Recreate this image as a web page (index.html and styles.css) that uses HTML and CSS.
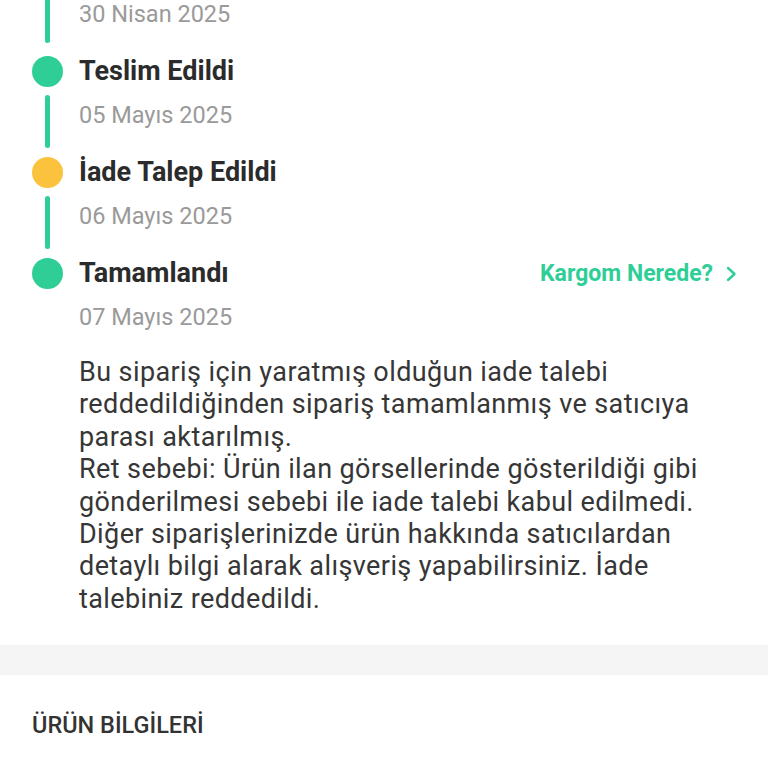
FILE: index.html
```html
<!DOCTYPE html>
<html lang="tr">
<head>
<meta charset="utf-8">
<link rel="stylesheet" href="styles.css">
</head>
<body>
<section class="timeline">
  <div class="item first">
    <div class="rail"><span class="line"></span></div>
    <div class="date">30 Nisan 2025</div>
  </div>
  <div class="item">
    <div class="dot green"></div>
    <div class="title">Teslim Edildi</div>
    <div class="rail"><span class="line"></span></div>
    <div class="date">05 Mayıs 2025</div>
  </div>
  <div class="item">
    <div class="dot yellow"></div>
    <div class="title">İade Talep Edildi</div>
    <div class="rail"><span class="line"></span></div>
    <div class="date">06 Mayıs 2025</div>
  </div>
  <div class="item last">
    <div class="dot green"></div>
    <div class="title row">
      <span>Tamamlandı</span>
      <a class="cargo">Kargom Nerede?
        <svg class="chev" width="11" height="16" viewBox="0 0 11 16"><path d="M2 2 L8.5 8 L2 14" fill="none" stroke="currentColor" stroke-width="2.4" stroke-linecap="round" stroke-linejoin="round"/></svg>
      </a>
    </div>
    <div class="rail"></div>
    <div class="date">07 Mayıs 2025</div>
  </div>
  <p class="note">Bu sipariş için yaratmış olduğun iade talebi reddedildiğinden sipariş tamamlanmış ve satıcıya parası aktarılmış.<br>Ret sebebi: Ürün ilan görsellerinde gösterildiği gibi gönderilmesi sebebi ile iade talebi kabul edilmedi. Diğer siparişlerinizde ürün hakkında satıcılardan detaylı bilgi alarak alışveriş yapabilirsiniz. İade talebiniz reddedildi.</p>
</section>
<div class="band"></div>
<section class="product">
  <h2 class="section-title">ÜRÜN BİLGİLERİ</h2>
</section>
</body>
</html>
```
FILE: styles.css
```css
* { box-sizing: border-box; }
html, body { margin: 0; padding: 0; background: #fff; }
body {
  font-family: Roboto, "Noto Sans", "Liberation Sans", sans-serif;
  color: #333;
  width: 768px;
  height: 768px;
  overflow: hidden;
}
.timeline {
  padding: 0 32px 0 31px;
}
.item {
  display: grid;
  grid-template-columns: 32px 1fr;
  column-gap: 16px;
}
.item.first {
  margin-top: -14px;
}
.item.first .rail { padding-top: 0; }
.item.first .line { height: 57px; }
.dot {
  width: 31px;
  height: 31px;
  border-radius: 50%;
  align-self: center;
  justify-self: center;
}
.dot.green { background: #2fce97; }
.dot.yellow { background: #fbc23d; }
.title {
  font-size: 27px;
  font-weight: 700;
  color: #2b2b2b;
  line-height: 31px;
}
.title.row {
  display: flex;
  justify-content: space-between;
  align-items: center;
}
.cargo {
  color: #2fce97;
  font-size: 23px;
  font-weight: 700;
  display: flex;
  align-items: center;
  gap: 13px;
  margin-right: -1px;
}
.chev { display: block; }
.rail {
  display: flex;
  justify-content: center;
  padding: 8px 0 9px;
  height: 70px;
}
.line {
  display: block;
  width: 5px;
  height: 53px;
  border-radius: 3px;
  background: #2fce97;
}
.date {
  font-size: 23.5px;
  color: #9a9a9a;
  line-height: 28px;
  padding-top: 14px;
}
.item.last .rail { height: 67px; }
.note {
  margin: 0 0 0 48px;
  padding-right: 11px;
  font-size: 27px;
  letter-spacing: 0.4px;
  line-height: 32.4px;
  color: #363636;
}
.band {
  margin-top: 30px;
  height: 30px;
  background: #f5f5f5;
}
.product { padding: 0 32px; }
.section-title {
  margin: 36px 0 0;
  font-size: 23.5px;
  font-weight: 500;
  color: #333;
  line-height: 28px;
}
```
